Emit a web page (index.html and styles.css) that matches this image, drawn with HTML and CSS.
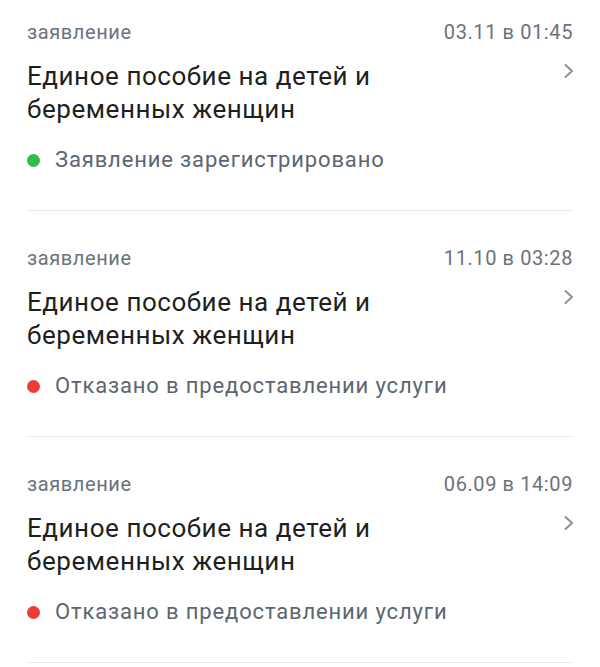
FILE: index.html
```html
<!DOCTYPE html>
<html>
<head>
  <title>Заявления</title>
  <link rel="stylesheet" href="styles.css">
</head>
<body>
  <div class="list">
    <div class="item">
      <div class="item-head">
        <span class="item-type">заявление</span>
        <span class="item-date">03.11 в 01:45</span>
      </div>
      <div class="item-body">
        <div class="item-title">Единое пособие на детей и беременных женщин</div>
        <svg class="chevron" width="12" height="16" viewBox="0 0 12 16">
          <path d="M2.5 2 L9 8 L2.5 14" fill="none" stroke="#8b9098" stroke-width="2" stroke-linecap="round" stroke-linejoin="round"/>
        </svg>
      </div>
      <div class="item-status">
        <span class="dot green"></span>
        <span>Заявление зарегистрировано</span>
      </div>
    </div>

    <div class="item">
      <div class="item-head">
        <span class="item-type">заявление</span>
        <span class="item-date">11.10 в 03:28</span>
      </div>
      <div class="item-body">
        <div class="item-title">Единое пособие на детей и беременных женщин</div>
        <svg class="chevron" width="12" height="16" viewBox="0 0 12 16">
          <path d="M2.5 2 L9 8 L2.5 14" fill="none" stroke="#8b9098" stroke-width="2" stroke-linecap="round" stroke-linejoin="round"/>
        </svg>
      </div>
      <div class="item-status">
        <span class="dot red"></span>
        <span>Отказано в предоставлении услуги</span>
      </div>
    </div>

    <div class="item">
      <div class="item-head">
        <span class="item-type">заявление</span>
        <span class="item-date">06.09 в 14:09</span>
      </div>
      <div class="item-body">
        <div class="item-title">Единое пособие на детей и беременных женщин</div>
        <svg class="chevron" width="12" height="16" viewBox="0 0 12 16">
          <path d="M2.5 2 L9 8 L2.5 14" fill="none" stroke="#8b9098" stroke-width="2" stroke-linecap="round" stroke-linejoin="round"/>
        </svg>
      </div>
      <div class="item-status">
        <span class="dot red"></span>
        <span>Отказано в предоставлении услуги</span>
      </div>
    </div>
  </div>
</body>
</html>
```

FILE: styles.css
```css
body {
  margin: 0;
  font-family: Roboto, "Noto Sans", Arial, sans-serif;
  background-color: #fff;
}

.list {
  padding: 0 27px;
}

.item {
  padding: 20px 0 37px;
  border-bottom: 1px solid #e6e7e9;
}

.item + .item {
  padding-top: 35px;
}

.item-head {
  display: flex;
  justify-content: space-between;
  align-items: center;
  font-size: 20px;
  line-height: 24px;
  color: #6b727c;
  letter-spacing: 0.6px;
}

.item-body {
  display: flex;
  justify-content: space-between;
  align-items: flex-start;
  margin-top: 16px;
}

.item-title {
  font-size: 26px;
  line-height: 33px;
  color: #1e1f21;
  letter-spacing: 0.55px;
  max-width: 420px;
}

.chevron {
  margin-top: 3px;
  margin-right: -2px;
}

.item-status {
  display: flex;
  align-items: center;
  margin-top: 21px;
  font-size: 22px;
  line-height: 26px;
  color: #5d6570;
  letter-spacing: 0.85px;
}

.dot {
  width: 13px;
  height: 13px;
  border-radius: 50%;
  margin-right: 15px;
}

.dot.green {
  background-color: #2fbd48;
}

.dot.red {
  background-color: #ef3b33;
}
```
